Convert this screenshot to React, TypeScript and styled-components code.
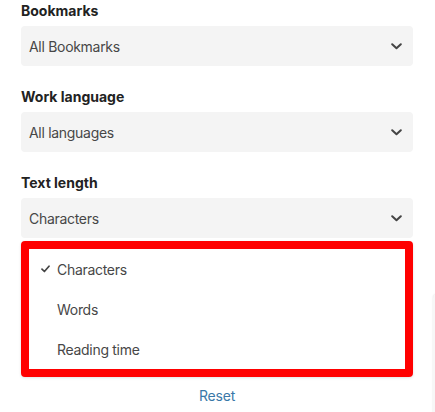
import React from "react";
import styled, { createGlobalStyle } from "styled-components";

const Global = createGlobalStyle`
  html, body { margin: 0; padding: 0; background: #fff; }
  body { font-family: Inter, "Noto Sans", sans-serif; -webkit-font-smoothing: antialiased; }
  * { box-sizing: border-box; }
`;

const Page = styled.div`
  position: relative;
  width: 435px;
  height: 412px;
  overflow: hidden;
  padding: 1px 22px 0 21px;
  display: flex;
  flex-direction: column;
  gap: 21px;
`;

const Field = styled.div`
  display: flex;
  flex-direction: column;
  gap: 5px;
`;

const Label = styled.div`
  font-size: 14px;
  line-height: 20px;
  font-weight: 700;
  color: #222;
`;

const SelectBox = styled.div`
  height: 40px;
  border-radius: 4px;
  background: #f4f4f4;
  display: flex;
  align-items: center;
  justify-content: space-between;
  padding: 0 11px 0 8px;
  font-size: 14px;
  letter-spacing: -0.3px;
  color: #474747;
`;

const Chevron = () => (
  <svg width="11" height="7" viewBox="0 0 11 7" fill="none">
    <path d="M1.2 1.2 L5.5 5.3 L9.8 1.2" stroke="#444" strokeWidth="2" strokeLinecap="round" strokeLinejoin="round" />
  </svg>
);

const Check = () => (
  <svg width="9" height="8" viewBox="0 0 9 8" fill="none">
    <path d="M1 4.2 L3.4 6.5 L8 1.2" stroke="#444" strokeWidth="1.7" strokeLinecap="round" strokeLinejoin="round" />
  </svg>
);

const OpenField = styled.div`
  display: flex;
  flex-direction: column;
  gap: 3px;
`;

const Menu = styled.div`
  border: 8px solid #ff0000;
  border-radius: 4px;
  background: #fff;
  box-shadow: 0 1px 3px rgba(0, 0, 0, 0.12);
  display: flex;
  flex-direction: column;
`;

const Option = styled.div`
  height: 40px;
  display: flex;
  align-items: center;
  padding-left: 12px;
  gap: 7px;
  font-size: 14px;
  letter-spacing: -0.3px;
  color: #474747;
`;

const CheckSlot = styled.span`
  width: 9px;
  display: inline-flex;
  align-items: center;
`;

const ResetRow = styled.div`
  margin-top: -12px;
  display: flex;
  justify-content: center;
`;

const ResetLink = styled.a`
  font-size: 14px;
  line-height: 20px;
  letter-spacing: -0.2px;
  color: #3a78a8;
  text-decoration: none;
  cursor: pointer;
`;

const EdgePanel = styled.div`
  position: absolute;
  left: 433px;
  top: 294px;
  width: 10px;
  height: 130px;
  border-radius: 4px;
  background: #f7f7f7;
  box-shadow: 0 0 2px rgba(0, 0, 0, 0.12);
`;

const options = ["Characters", "Words", "Reading time"];

export default function App() {
  return (
    <>
      <Global />
      <Page>
        <Field>
          <Label>Bookmarks</Label>
          <SelectBox>
            <span>All Bookmarks</span>
            <Chevron />
          </SelectBox>
        </Field>
        <Field>
          <Label>Work language</Label>
          <SelectBox>
            <span>All languages</span>
            <Chevron />
          </SelectBox>
        </Field>
        <Field>
          <Label>Text length</Label>
          <OpenField>
            <SelectBox>
              <span>Characters</span>
              <Chevron />
            </SelectBox>
            <Menu>
              {options.map((o, i) => (
                <Option key={o}>
                  <CheckSlot>{i === 0 ? <Check /> : null}</CheckSlot>
                  <span>{o}</span>
                </Option>
              ))}
            </Menu>
          </OpenField>
        </Field>
        <ResetRow>
          <ResetLink>Reset</ResetLink>
        </ResetRow>
        <EdgePanel />
      </Page>
    </>
  );
}
